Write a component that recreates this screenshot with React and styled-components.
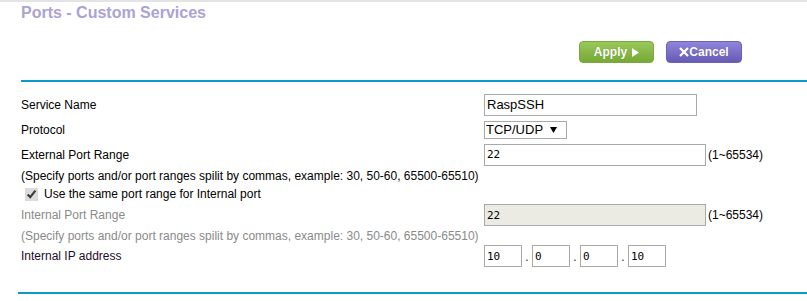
import React from 'react';
import styled, { createGlobalStyle } from 'styled-components';

const GlobalStyle = createGlobalStyle`
  body {
    margin: 0;
    background: #ffffff;
    font-family: 'Liberation Sans', Arial, sans-serif;
    font-size: 12px;
    color: #000000;
  }
`;

const Page = styled.div`
  width: 807px;
  height: 301px;
  overflow: hidden;
`;

const Header = styled.div`
  border-top: 2px solid #e4e4e4;
`;

const Title = styled.h1`
  margin: 1px 0 0 21px;
  font-size: 16px;
  line-height: 20px;
  font-weight: bold;
  color: #aaa3d8;
`;

const ButtonBar = styled.div`
  display: flex;
  justify-content: flex-end;
  gap: 12px;
  margin-top: 18px;
  padding-right: 65px;
`;

const Button = styled.button`
  display: flex;
  align-items: center;
  justify-content: center;
  gap: 5px;
  height: 22px;
  width: ${(p) => p.$w}px;
  padding: 0;
  border-radius: 4px;
  border: 1px solid ${(p) => p.$edge};
  background: linear-gradient(${(p) => p.$top}, ${(p) => p.$bottom});
  color: #ffffff;
  font-family: 'Liberation Sans', Arial, sans-serif;
  font-size: 12px;
  font-weight: bold;
  text-shadow: 0 0 1px rgba(0, 0, 0, 0.25);
  cursor: pointer;
`;

const CancelLabel = styled.span`
  display: flex;
  align-items: center;
`;

const Rule = styled.div`
  height: 2px;
  margin-left: ${(p) => p.$inset}px;
  background: #0a99c9;
  margin-top: ${(p) => p.$top}px;
`;

const Form = styled.div`
  margin-top: 10px;
`;

const Row = styled.div`
  display: grid;
  grid-template-columns: 463px auto;
  align-items: center;
  height: ${(p) => p.$h}px;
  padding-left: 21px;
  color: ${(p) => p.$color || '#000000'};
`;

const Field = styled.div`
  display: flex;
  align-items: center;
`;

const Hint = styled.div`
  display: flex;
  align-items: center;
  height: ${(p) => p.$h}px;
  padding-left: 21px;
  color: ${(p) => p.$color || '#000000'};
`;

const CheckRow = styled.label`
  display: flex;
  align-items: center;
  height: 20px;
  padding-left: 21px;
  gap: 6px;

  input {
    margin: 0 0 0 4px;
    width: 13px;
    height: 13px;
    accent-color: #dcdcdc;
  }
`;

const TextInput = styled.input`
  box-sizing: border-box;
  width: ${(p) => p.$w}px;
  height: 22px;
  padding: 0 2px;
  border: 1px solid #a9a9a9;
  background: ${(p) => (p.disabled ? '#ebebe4' : '#ffffff')};
  color: #000000;
  font-family: ${(p) =>
    p.$mono ? "'DejaVu Sans Mono', monospace" : "'Liberation Sans', Arial, sans-serif"};
  font-size: ${(p) => (p.$mono ? 11 : 13)}px;
  outline: none;
`;

const Range = styled.span`
  margin-left: 2px;
  color: #000000;
`;

const SelectWrap = styled.div`
  position: relative;
  width: 83px;
  height: 18px;
`;

const Select = styled.select`
  box-sizing: border-box;
  width: 100%;
  height: 100%;
  appearance: none;
  border: 1px solid #a9a9a9;
  border-radius: 0;
  background: #ffffff;
  padding: 0 0 0 1px;
  font-family: 'Liberation Sans', Arial, sans-serif;
  font-size: 13px;
  color: #000000;
`;

const Arrow = styled.svg`
  position: absolute;
  right: 10px;
  top: 6px;
  pointer-events: none;
`;

const Dot = styled.span`
  width: 10px;
  text-align: center;
  align-self: flex-end;
  padding-bottom: 3px;
`;

function IpField({ parts }) {
  return (
    <Field>
      {parts.map((v, i) => (
        <React.Fragment key={i}>
          {i > 0 && <Dot>.</Dot>}
          <TextInput $w={38} $mono defaultValue={v} />
        </React.Fragment>
      ))}
    </Field>
  );
}

export default function App() {
  return (
    <Page>
      <GlobalStyle />
      <Header>
        <Title>Ports - Custom Services</Title>
      </Header>
      <ButtonBar>
        <Button $w={75} $top="#99c858" $bottom="#76a937" $edge="#7aa83f">
          Apply
          <svg width="7" height="9" viewBox="0 0 7 9">
            <path d="M0 0 L7 4.5 L0 9 Z" fill="#ffffff" />
          </svg>
        </Button>
        <Button $w={76} $top="#8f85dd" $bottom="#675bb3" $edge="#6d62b8">
          <CancelLabel>
            <svg width="10" height="10" viewBox="0 0 10 10">
              <path d="M1 1 L9 9 M9 1 L1 9" stroke="#ffffff" strokeWidth="2.2" />
            </svg>
            Cancel
          </CancelLabel>
        </Button>
      </ButtonBar>
      <Rule $inset={21} $top={17} />
      <Form>
        <Row $h={25}>
          <span>Service Name</span>
          <Field>
            <TextInput $w={213} defaultValue="RaspSSH" />
          </Field>
        </Row>
        <Row $h={25}>
          <span>Protocol</span>
          <Field>
            <SelectWrap>
              <Select defaultValue="both">
                <option value="both">TCP/UDP</option>
                <option value="tcp">TCP</option>
                <option value="udp">UDP</option>
              </Select>
              <Arrow width="7" height="6" viewBox="0 0 7 6">
                <path d="M0 0 L7 0 L3.5 6 Z" fill="#000000" />
              </Arrow>
            </SelectWrap>
          </Field>
        </Row>
        <Row $h={25}>
          <span>External Port Range</span>
          <Field>
            <TextInput $w={222} $mono defaultValue="22" />
            <Range>(1~65534)</Range>
          </Field>
        </Row>
        <Hint $h={17}>
          (Specify ports and/or port ranges spilit by commas, example: 30, 50-60, 65500-65510)
        </Hint>
        <CheckRow>
          <input type="checkbox" defaultChecked />
          Use the same port range for Internal port
        </CheckRow>
        <Row $h={22} $color="#8a8a8a">
          <span>Internal Port Range</span>
          <Field>
            <TextInput $w={222} $mono disabled defaultValue="22" />
            <Range>(1~65534)</Range>
          </Field>
        </Row>
        <Hint $h={19} $color="#8a8a8a">
          (Specify ports and/or port ranges spilit by commas, example: 30, 50-60, 65500-65510)
        </Hint>
        <Row $h={22} $color="#1d0a2e">
          <span>Internal IP address</span>
          <IpField parts={['10', '0', '0', '10']} />
        </Row>
      </Form>
      <Rule $inset={18} $top={25} />
    </Page>
  );
}
